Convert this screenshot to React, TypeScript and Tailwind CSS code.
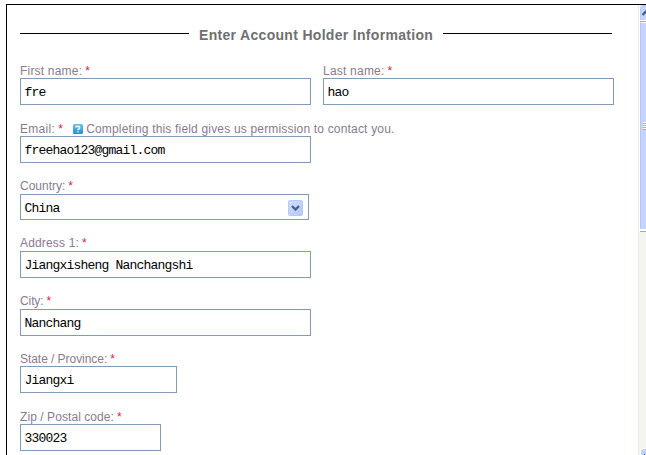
import { type ReactNode } from "react";

const labelFont = "font-['Liberation_Sans',Arial,sans-serif]";

type FieldProps = {
  label: string;
  value: string;
  tracking?: string;
  width?: string;
  labelBox?: string;
  hint?: ReactNode;
};

function Label({ text, tracking, hint, box }: { text: string; tracking: string; hint?: ReactNode; box: string }) {
  return (
    <div className={`flex whitespace-pre text-[12px] leading-[14px] text-[#887b91] ${labelFont} ${box}`}>
      <span className={tracking}>{text}</span>
      <span className="ml-[3px] w-[5px] text-[#e0184c]">*</span>
      {hint}
    </div>
  );
}

function Field({ label, value, tracking = "tracking-normal", width = "w-[291px]", labelBox = "h-[14px]", hint }: FieldProps) {
  return (
    <div className="flex flex-col">
      <Label text={label} tracking={tracking} hint={hint} box={labelBox} />
      <input
        className={`h-[27px] border border-[#7f9db9] bg-white pl-[3.5px] pt-0.5 font-['Liberation_Mono',monospace] text-[13px] tracking-[-0.8px] text-black outline-none ${width}`}
        defaultValue={value}
        spellCheck={false}
      />
    </div>
  );
}

function HelpIcon() {
  return (
    <svg className="ml-[10px] mt-[2px] h-[10px] w-[10px] shrink-0" viewBox="0 0 10 10">
      <defs>
        <linearGradient id="help" x2="0" y2="1">
          <stop stopColor="#62c5ea" />
          <stop offset="1" stopColor="#258fc5" />
        </linearGradient>
      </defs>
      <rect width="10" height="10" rx="1.5" fill="url(#help)" />
      <path d="M3.1 3.5V2.5H6.6V4.5L5 5.4V6.3M5 7.2V8.4" fill="none" stroke="white" strokeWidth="1.3" />
    </svg>
  );
}

function Scrollbar() {
  return (
    <div className="flex w-[8px] shrink-0 flex-col border-l border-[#eeebdd] bg-[#f5f5ef]">
      <div className="h-[227px] border-l border-white">
        <div className="h-[15px] overflow-hidden rounded-tl-sm border-l border-t border-[#b8cafa] bg-[#c4d4fd]">
          <svg className="h-[14px] w-[5px]" viewBox="0 0 5 14">
            <path d="M1.5 9L6 4.5" fill="none" stroke="#4d6185" strokeWidth="2.4" />
          </svg>
        </div>
        <div className="h-[2px] border-b border-[#8daade] bg-white" />
        <div className="flex h-[207px] items-center justify-end border-l border-t border-[#b3c6f5] border-t-white bg-[#c5d4fd]">
          <div className="flex w-[3px] flex-col">
            <div className="h-px bg-white" /><div className="h-px bg-[#8cb0f8]" />
            <div className="h-px bg-white" /><div className="h-px bg-[#8cb0f8]" />
            <div className="h-px bg-white" /><div className="h-px bg-[#8cb0f8]" />
            <div className="h-px bg-white" /><div className="h-px bg-[#8cb0f8]" />
          </div>
        </div>
        <div className="h-[3px] border-b border-[#8daade] bg-white" />
      </div>
      <div className="flex-1" />
      <div className="ml-px h-[7px] overflow-hidden rounded-tl-sm border-l border-t border-white bg-[#bfd1fc] pl-[3px] pt-[5px]">
        <div className="h-px w-px bg-[#4d6185]" />
      </div>
    </div>
  );
}

export default function App() {
  return (
    <main className="h-[455px] w-[646px] overflow-hidden bg-white pl-[6px] pt-[4px]">
      <section className="flex h-[451px] border-l border-t border-black">
        <form className="w-[631px] pl-[13px] pt-[21px]">
          <div className="flex h-[18px] w-[592px] items-center justify-between">
            <div className="mb-[3px] h-px w-[169px] bg-black" />
            <h1 className={`w-[234px] whitespace-nowrap text-[14px] font-bold leading-[18px] tracking-[0.31px] text-[#707070] ${labelFont}`}>
              Enter Account Holder Information
            </h1>
            <div className="mb-[3px] h-px w-[169px] bg-black" />
          </div>
          <div className="mt-[20px] flex gap-[12px]">
            <Field label="First name:" value="fre" tracking="tracking-[0.2px]" />
            <Field label="Last name:" value="hao" tracking="tracking-[0.22px]" />
          </div>
          <div className="mt-[17px]">
            <Field
              label="Email:"
              value="freehao123@gmail.com"
              tracking="tracking-[0.3px]"
              hint={<><HelpIcon /><span className="ml-[3px] tracking-[0.18px]">Completing this field gives us permission to contact you.</span></>}
            />
          </div>
          <div className="mt-[16px] flex flex-col">
            <Label text="Country:" tracking="tracking-normal" box="h-[15px]" />
            <div className="flex h-[26px] w-[289px] items-center justify-between border border-[#7f9db9] pl-[3.5px] pr-[5px]">
              <span className="pt-[3px] font-['Liberation_Mono',monospace] text-[13px] leading-[18px] tracking-[-0.8px]">China</span>
              <span className="mt-px flex h-[16px] w-[15px] items-center justify-center rounded-[2px] border border-[#b6c9f6] bg-linear-to-br from-[#d0defe] to-[#b1c9fb]">
                <svg className="h-[8px] w-[9px] shrink-0" viewBox="0 0 9 8"><path d="M1 2L4.5 5.5L8 2" fill="none" stroke="#4d6185" strokeWidth="2.4" /></svg>
              </span>
            </div>
          </div>
          <div className="mt-[16px]"><Field label="Address 1:" value="Jiangxisheng Nanchangshi" tracking="tracking-[0.17px]" labelBox="h-[15px]" /></div>
          <div className="mt-[16px]"><Field label="City:" value="Nanchang" tracking="tracking-[-0.1px]" labelBox="h-[15px]" /></div>
          <div className="mt-[16px]"><Field label="State / Province:" value="Jiangxi" tracking="tracking-[-0.05px]" width="w-[157px]" /></div>
          <div className="mt-[17px]"><Field label="Zip / Postal code:" value="330023" tracking="tracking-[0.07px]" width="w-[141px]" /></div>
        </form>
        <Scrollbar />
      </section>
    </main>
  );
}
